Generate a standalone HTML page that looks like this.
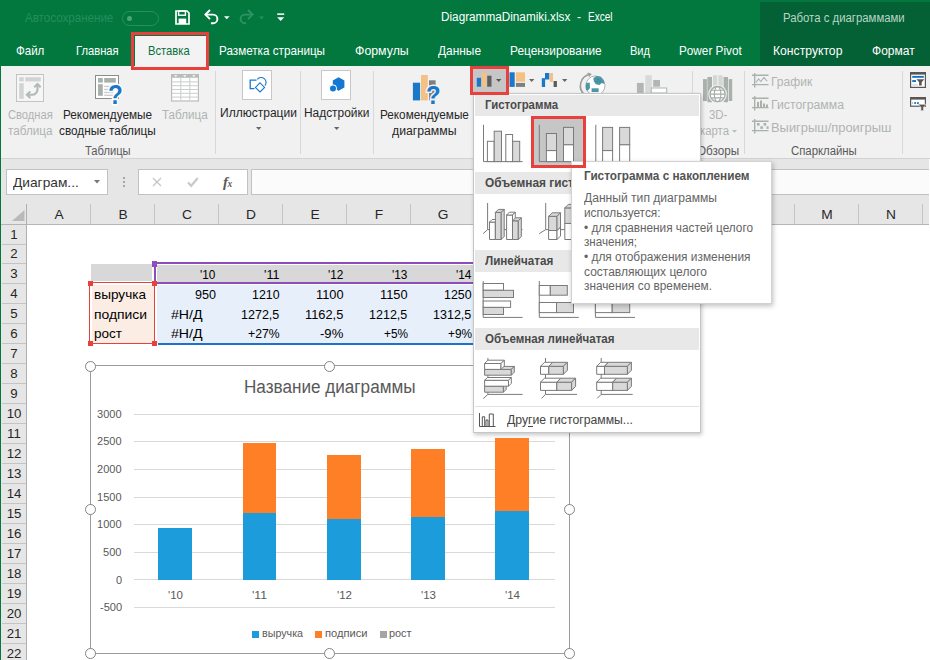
<!DOCTYPE html>
<html><head><meta charset="utf-8"><title>Excel</title>
<style>
*{box-sizing:border-box;margin:0;padding:0}
html,body{width:930px;height:660px;overflow:hidden;background:#fff}
body{font-family:"Liberation Sans",sans-serif;position:relative;color:#222}
.a{position:absolute;white-space:nowrap}
.t{position:absolute;white-space:nowrap;line-height:1;transform-origin:0 50%}
svg{position:absolute;overflow:visible}
</style></head><body>
<div class="a" style="left:0;top:0;width:930px;height:66px;background:#02783f"></div><div class="a" style="left:760px;top:2px;width:170px;height:64px;background:#046035"></div><div class="t" style="left:25.00px;top:11.17px;font-size:13px;color:#268d5c;transform:scaleX(0.8910);">Автосохранение</div><div class="a" style="left:121.5px;top:11px;width:37px;height:15px;border:1px solid #2a8f5e;border-radius:8px"></div><div class="a" style="left:127px;top:16px;width:5px;height:5px;border-radius:3px;background:#4aa57a"></div><svg style="left:175px;top:10px" width="15" height="15" viewBox="0 0 15 15"><path d="M1 1h11l2 2v11h-13z" fill="none" stroke="#fff" stroke-width="1.7"/><rect x="3.6" y="1" width="6.8" height="4.2" fill="none" stroke="#fff" stroke-width="1.4"/><rect x="3.6" y="8.6" width="7.6" height="5.4" fill="#fff"/></svg><svg style="left:203px;top:8px" width="30" height="20" viewBox="0 0 30 20"><path d="M2.5 6.6h7.6a4.3 4.3 0 0 1 0 8.6h-2.2" fill="none" stroke="#fff" stroke-width="1.9"/><path d="M7 2l-4.6 4.6 4.6 4.6" fill="none" stroke="#fff" stroke-width="1.9"/><path d="M21 8.2h5.6l-2.8 3z" fill="#fff"/></svg><svg style="left:238px;top:8px" width="30" height="20" viewBox="0 0 30 20"><path d="M13.5 6.6h-6.6a4.3 4.3 0 0 0 0 8.6h1.2" fill="none" stroke="#2e9464" stroke-width="1.9"/><path d="M10 2l4.6 4.6-4.6 4.6" fill="none" stroke="#2e9464" stroke-width="1.9"/><path d="M21 8.6h5l-2.5 2.8z" fill="#2a8f5e"/></svg><svg style="left:276px;top:12px" width="10" height="12" viewBox="0 0 10 12"><rect x="1.2" y="1.4" width="7" height="1.5" fill="#fff"/><path d="M1.2 5.2h7l-3.5 3.8z" fill="#fff"/></svg><div class="t" style="left:440.70px;top:11.26px;font-size:12.5px;color:#fff;transform:scaleX(0.9402);">DiagrammaDinamiki.xlsx</div><div class="t" style="left:576.50px;top:11.26px;font-size:12.5px;color:#fff;transform:scaleX(0.9609);">-</div><div class="t" style="left:587.70px;top:11.26px;font-size:12.5px;color:#fff;transform:scaleX(0.8048);">Excel</div><div class="t" style="left:783.30px;top:11.56px;font-size:12px;color:#b9d6c5;transform:scaleX(0.9471);">Работа с диаграммами</div><div class="a" style="left:135px;top:36px;width:71px;height:31px;background:#f3f3f3"></div><div class="t" style="left:16.00px;top:43.87px;font-size:13px;color:#fff;transform:scaleX(0.8855);">Файл</div><div class="t" style="left:75.70px;top:43.87px;font-size:13px;color:#fff;transform:scaleX(0.8610);">Главная</div><div class="t" style="left:148.30px;top:43.87px;font-size:13px;color:#0a7040;transform:scaleX(0.8630);">Вставка</div><div class="t" style="left:219.00px;top:43.87px;font-size:13px;color:#fff;transform:scaleX(0.8988);">Разметка страницы</div><div class="t" style="left:355.00px;top:43.87px;font-size:13px;color:#fff;transform:scaleX(0.9493);">Формулы</div><div class="t" style="left:438.30px;top:43.87px;font-size:13px;color:#fff;transform:scaleX(0.9155);">Данные</div><div class="t" style="left:510.00px;top:43.87px;font-size:13px;color:#fff;transform:scaleX(0.9135);">Рецензирование</div><div class="t" style="left:630.00px;top:43.87px;font-size:13px;color:#fff;transform:scaleX(0.8504);">Вид</div><div class="t" style="left:679.30px;top:43.87px;font-size:13px;color:#fff;transform:scaleX(0.9040);">Power Pivot</div><div class="t" style="left:773.30px;top:43.87px;font-size:13px;color:#fff;transform:scaleX(0.9363);">Конструктор</div><div class="t" style="left:872.30px;top:43.87px;font-size:13px;color:#fff;transform:scaleX(0.9247);">Формат</div><div class="a" style="left:0;top:66px;width:930px;height:92px;background:#f1f1f1"></div><div class="a" style="left:0;top:158px;width:930px;height:1px;background:#d2d2d2"></div><svg style="left:16px;top:74px" width="28" height="28" viewBox="0 0 28 28"><rect x=".5" y=".5" width="27" height="27" fill="#f6f6f6" stroke="#c3c5c3"/><rect x="3.2" y="3.2" width="4.5" height="4.2" fill="#d3d3d3"/><rect x="9.2" y="3.2" width="15.6" height="4.2" fill="#d3d3d3"/><rect x="3.2" y="9.2" width="4.5" height="15.6" fill="#d3d3d3"/><path d="M11.5 20.8h4.5a5.5 5.5 0 0 0 5.5-5.5v-4.5" fill="none" stroke="#b1bab5" stroke-width="2.100"/><path d="M14.3 17.6l-3.4 3.2 3.4 3.2" fill="none" stroke="#b1bab5" stroke-width="2.100"/><path d="M18.3 13.3l3.2-3.3 3.2 3.3" fill="none" stroke="#b1bab5" stroke-width="2.100"/></svg><div class="t" style="left:7.70px;top:109.16px;font-size:12px;color:#b0b4b1;transform:scaleX(0.9290);">Сводная</div><div class="t" style="left:8.30px;top:125.26px;font-size:12px;color:#b0b4b1;transform:scaleX(0.9776);">таблица</div><svg style="left:95px;top:75px" width="30" height="30" viewBox="0 0 30 30"><rect x=".5" y=".5" width="23" height="23" fill="#fff" stroke="#8c8c8c" stroke-width="1"/><rect x="3" y="3" width="4.8" height="4.6" fill="#a8b0ab"/><rect x="9.2" y="3" width="11.6" height="4.6" fill="#a8b0ab"/><rect x="3" y="9.2" width="4.8" height="11.6" fill="#a8b0ab"/><rect x="9.2" y="10.8" width="9" height="1.3" fill="#c9c9c9"/><rect x="9.2" y="13.8" width="9" height="1.3" fill="#c9c9c9"/><rect x="9.2" y="16.8" width="9" height="1.3" fill="#c9c9c9"/><rect x="9.2" y="19.6" width="9" height="1.3" fill="#c9c9c9"/></svg><div class="t" style="left:107.800px;top:81.600px;font-size:27px;font-weight:bold;color:#fff;transform:scaleX(.9);-webkit-text-stroke:3px #fff">?</div><div class="t" style="left:107.800px;top:81.600px;font-size:27px;font-weight:bold;color:#1b78c9;transform:scaleX(.9)">?</div><div class="t" style="left:62.70px;top:109.16px;font-size:12px;color:#262626;transform:scaleX(0.9796);">Рекомендуемые</div><div class="t" style="left:58.80px;top:125.26px;font-size:12px;color:#262626;transform:scaleX(0.9829);">сводные таблицы</div><svg style="left:171px;top:74px" width="28" height="28" viewBox="0 0 28 28"><rect x="0" y="0" width="28" height="27.6" fill="#b9bdba"/><rect x="1.2" y="3.8" width="25.6" height="22.6" fill="#fff"/><rect x="9.3" y="3.8" width="1" height="22.6" fill="#c9ccca"/><rect x="18.3" y="3.8" width="1" height="22.6" fill="#c9ccca"/><rect x="1.2" y="7.4" width="25.6" height="1" fill="#c9ccca"/><rect x="1.2" y="11.2" width="25.6" height="1" fill="#c9ccca"/><rect x="1.2" y="15" width="25.6" height="1" fill="#c9ccca"/><rect x="1.2" y="18.8" width="25.6" height="1" fill="#c9ccca"/><rect x="1.2" y="22.6" width="25.6" height="1" fill="#c9ccca"/><path d="M3.1 1.2h3.4l-1.7 1.9z" fill="#fff"/><path d="M12.1 1.2h3.4l-1.7 1.9z" fill="#fff"/><path d="M21.1 1.2h3.4l-1.7 1.9z" fill="#fff"/></svg><div class="t" style="left:162.00px;top:109.16px;font-size:12px;color:#b0b4b1;transform:scaleX(0.9713);">Таблица</div><div class="t" style="left:85.20px;top:144.96px;font-size:12px;color:#5a5a5a;transform:scaleX(0.9306);">Таблицы</div><div class="a" style="left:215px;top:70.5px;width:1px;height:83.5px;background:#d8d8d8"></div><div class="a" style="left:242px;top:70px;width:30px;height:30px;background:#fff;border:1px solid #c8c8c8"></div><svg style="left:242px;top:70px" width="30" height="30" viewBox="0 0 30 30"><path d="M14.5 10.2h-6.3v8.4h4.2" fill="none" stroke="#1b78c9" stroke-width="1.3"/><path d="M15.3 9.3a4.6 4.6 0 1 1 7.6 6.4" fill="none" stroke="#1b78c9" stroke-width="1.1"/><path d="M18 12.8l4.6 4.6-4.6 4.6-4.6-4.6z" fill="#fff" stroke="#1b78c9" stroke-width="1.1"/></svg><div class="t" style="left:219.60px;top:106.56px;font-size:12px;color:#262626;transform:scaleX(1.0019);">Иллюстрации</div><svg style="left:255.8px;top:126.7px" width="5.4" height="3" viewBox="0 0 5.4 3"><path d="M0 0h5.4l-2.7 3z" fill="#666"/></svg><div class="a" style="left:300px;top:70.5px;width:1px;height:83.5px;background:#d8d8d8"></div><div class="a" style="left:321px;top:70px;width:30px;height:30px;background:#fff;border:1px solid #c8c8c8"></div><svg style="left:321px;top:70px" width="30" height="30" viewBox="0 0 30 30"><path d="M17.6 7.2l5.8 3.4v6.8l-5.8 3.4-5.8-3.4v-6.8z" fill="#1477d4"/><circle cx="12" cy="18.4" r="3.9" fill="#fff"/><circle cx="12" cy="18.4" r="3" fill="#1477d4"/></svg><div class="t" style="left:304.40px;top:106.56px;font-size:12px;color:#262626;transform:scaleX(0.9918);">Надстройки</div><svg style="left:334.3px;top:126.7px" width="5.4" height="3" viewBox="0 0 5.4 3"><path d="M0 0h5.4l-2.7 3z" fill="#666"/></svg><div class="a" style="left:373px;top:70.5px;width:1px;height:83.5px;background:#d8d8d8"></div><svg style="left:412px;top:74px" width="30" height="30" viewBox="0 0 30 30"><rect x=".9" y="8.7" width="7.2" height="17.7" fill="#1b78c9"/><rect x="9" y="1" width="6.8" height="25.4" fill="#f4c083"/><rect x="17" y="6.3" width="6.6" height="20.1" fill="#7f7f7f"/></svg><div class="t" style="left:426.300px;top:82.300px;font-size:26px;font-weight:bold;color:#fff;transform:scaleX(.92);-webkit-text-stroke:3px #f1f1f1">?</div><div class="t" style="left:426.300px;top:82.300px;font-size:26px;font-weight:bold;color:#1b78c9;transform:scaleX(.92)">?</div><div class="t" style="left:380.40px;top:109.16px;font-size:12px;color:#262626;transform:scaleX(0.9785);">Рекомендуемые</div><div class="t" style="left:392.30px;top:125.26px;font-size:12px;color:#262626;transform:scaleX(1.0201);">диаграммы</div><div class="a" style="left:471px;top:67px;width:37px;height:27px;background:#c6c6c6"></div><svg style="left:470px;top:66px" width="100" height="30" viewBox="0 0 100 30"><rect x="6.8" y="11.8" width="4.3" height="8.9" fill="#1b78c9"/><rect x="11.8" y="6.6" width="4.5" height="14.1" fill="#f4c083"/><rect x="17.2" y="9.7" width="4.3" height="11" fill="#5f5f5f"/><rect x="39.5" y="6.3" width="5.2" height="14.6" fill="#1b78c9"/><rect x="45.9" y="6.3" width="9.1" height="9.4" fill="#f4c083"/><rect x="45.9" y="16.9" width="9.1" height="4" fill="#7f7f7f"/><rect x="71.800" y="12.200" width="3.300" height="8.800" fill="#1b78c9"/><rect x="75" y="7" width="4.300" height="6.500" fill="#1b78c9"/><rect x="79.800" y="7" width="3.200" height="8.900" fill="#f4c083"/><rect x="83.600" y="15" width="3.300" height="6" fill="#5f5a5a"/></svg><svg style="left:496px;top:78.8px" width="5.4" height="3" viewBox="0 0 5.4 3"><path d="M0 0h5.4l-2.7 3z" fill="#555"/></svg><svg style="left:528.7px;top:78.8px" width="5.4" height="3" viewBox="0 0 5.4 3"><path d="M0 0h5.4l-2.7 3z" fill="#666"/></svg><svg style="left:561.7px;top:78.8px" width="5.4" height="3" viewBox="0 0 5.4 3"><path d="M0 0h5.4l-2.7 3z" fill="#666"/></svg><svg style="left:580px;top:70px" width="30" height="30" viewBox="0 0 30 30"><path d="M10.300 4.300A11.600 11.600 0 0 0 5 25" fill="none" stroke="#9b9b9b" stroke-width="1.600"/><path d="M7.500 3l3.300 1.300-2 2.400" fill="none" stroke="#9b9b9b" stroke-width="1.100"/><circle cx="15.400" cy="15.600" r="9.600" fill="#fff" stroke="#a0a0a0" stroke-width=".8"/><path d="M13.300 8.200l3-2.200 4.500.8 3 3.400.6 3.800-2.600-1-2.400 2-3.600-.8-2-3z" fill="#4f95a8"/><path d="M6.300 13l3.400-.6.300 5.600-2 2.600-1.800-.4c-.6-2.400-.6-4.800.1-7.200z" fill="#4f95a8"/><rect x="11.600" y="18.300" width="7" height="3.800" fill="#4f95a8"/><circle cx="18" cy="9.500" r=".6" fill="#1f7a4d"/><circle cx="20" cy="11" r=".6" fill="#1f7a4d"/><circle cx="17" cy="11.500" r=".6" fill="#1f7a4d"/></svg><svg style="left:636px;top:74px" width="32" height="20" viewBox="0 0 32 20"><rect x=".9" y="8.9" width="6.8" height="10" fill="#b1b6b3"/><rect x="9.3" y="1.2" width="6.5" height="18" fill="#d9d9d9"/><rect x="17.2" y="6" width="6.8" height="6.7" fill="#b1b6b3"/><rect x="15.3" y="14" width="15.4" height="5" fill="#fff" stroke="#b1b6b3"/></svg><div class="a" style="left:692px;top:70.5px;width:1px;height:83.5px;background:#d8d8d8"></div><svg style="left:703px;top:74px" width="30" height="29" viewBox="0 0 30 29"><rect x="0" y="5.1" width="3.9" height="21.9" fill="#a9b1ac"/><rect x="4.4" y="3" width="4.6" height="25.2" fill="#a9b1ac"/><rect x="10" y="1.2" width="4.2" height="27" fill="#d5d7d5"/><rect x="15.4" y="1.2" width="4.3" height="27" fill="#d5d7d5"/><rect x="20.6" y="3" width="4.4" height="25.2" fill="#a9b1ac"/><rect x="25.7" y="5.1" width="3.5" height="21.9" fill="#a9b1ac"/><circle cx="14.600" cy="20.100" r="9.300" fill="#f1f1f1"/><circle cx="14.600" cy="20.100" r="7.600" fill="#fff" stroke="#a4aca7" stroke-width="1.300"/><ellipse cx="14.600" cy="20.100" rx="3.300" ry="7.600" fill="none" stroke="#a4aca7" stroke-width="1.100"/><path d="M7 20.100h15.200M8.300 16.300h12.600M8.300 23.900h12.600" stroke="#a4aca7" stroke-width="1.100" fill="none"/></svg><div class="t" style="left:709.00px;top:109.16px;font-size:12px;color:#b0b4b1;transform:scaleX(0.9464);">3D-</div><div class="t" style="left:700.00px;top:125.26px;font-size:12px;color:#b0b4b1;transform:scaleX(0.9467);">карта</div><svg style="left:732px;top:130.4px" width="5" height="2.8" viewBox="0 0 5 2.8"><path d="M0 0h5l-2.5 2.8z" fill="#bdbdbd"/></svg><div class="t" style="left:697.00px;top:144.96px;font-size:12px;color:#5a5a5a;transform:scaleX(0.9750);">Обзоры</div><div class="a" style="left:744px;top:70.5px;width:1px;height:83.5px;background:#d8d8d8"></div><svg style="left:752px;top:72.500px" width="17" height="15" viewBox="0 0 17 15"><path d="M2.700 0v14.500M0 2.300h16.500M0 11.600h16.500" stroke="#a9b1ac" stroke-width="1.400" fill="none"/><path d="M4 9.500l2.600-3.600 2.300 2.600 3-4 3.300 3.600" stroke="#a9b1ac" stroke-width="1.100" fill="none"/></svg><svg style="left:752px;top:95.500px" width="17" height="15" viewBox="0 0 17 15"><path d="M2.700 0v14.500M0 2.300h16.500M0 11.600h16.500" stroke="#a9b1ac" stroke-width="1.400" fill="none"/><rect x="5" y="6" width="2" height="5" fill="#a9b1ac"/><rect x="8" y="4.500" width="2" height="6.500" fill="#a9b1ac"/><rect x="11" y="7.500" width="2" height="3.500" fill="#a9b1ac"/><rect x="14" y="8.500" width="2" height="2.500" fill="#a9b1ac"/></svg><svg style="left:752px;top:118.500px" width="17" height="15" viewBox="0 0 17 15"><path d="M2.700 0v14.500M0 2.300h16.500M0 11.600h16.500" stroke="#a9b1ac" stroke-width="1.400" fill="none"/><rect x="5" y="4" width="2.600" height="2.600" fill="#a9b1ac"/><rect x="8.300" y="7.300" width="2.600" height="2.600" fill="#a9b1ac"/><rect x="11.600" y="4" width="2.600" height="2.600" fill="#a9b1ac"/><rect x="14.600" y="7.300" width="2" height="2.600" fill="#a9b1ac"/></svg><div class="t" style="left:770.60px;top:75.56px;font-size:12.5px;color:#b0b4b1;transform:scaleX(0.9647);">График</div><div class="t" style="left:770.60px;top:98.66px;font-size:12.5px;color:#b0b4b1;transform:scaleX(0.9807);">Гистограмма</div><div class="t" style="left:770.60px;top:121.56px;font-size:12.5px;color:#b0b4b1;transform:scaleX(1.0328);">Выигрыш/проигрыш</div><div class="t" style="left:790.50px;top:144.96px;font-size:12px;color:#5a5a5a;transform:scaleX(0.9450);">Спарклайны</div><div class="a" style="left:902px;top:70.5px;width:1px;height:83.5px;background:#d8d8d8"></div><svg style="left:910px;top:72px" width="16" height="16" viewBox="0 0 16 16"><rect x=".6" y=".6" width="14.800" height="14.800" fill="#fff" stroke="#595555" stroke-width="1.200"/><rect x="0" y="0" width="16" height="2.600" fill="#595555"/><rect x="2.200" y="3.900" width="11.600" height="1.900" fill="#1570c4"/><rect x="2.200" y="8.100" width="3.800" height="1.900" fill="#1570c4"/><rect x="2.200" y="12.300" width="5.600" height="1.300" fill="#b9dcf2"/><path d="M6.500 7.300h7.800l-2.600 3v3.300h-2.600v-3.300z" fill="#595555"/></svg><svg style="left:910px;top:97px" width="16" height="14" viewBox="0 0 16 14"><rect x=".6" y=".6" width="14.800" height="8.600" fill="#fff" stroke="#595555" stroke-width="1.200"/><rect x="0" y="0" width="16" height="2.600" fill="#595555"/><rect x="4.200" y="5.200" width="1.900" height="1.700" fill="#1570c4"/><rect x="7" y="5.200" width="1.900" height="1.700" fill="#1570c4"/><rect x="2" y="5.200" width=".8" height="1.700" fill="#9aa"/><path d="M8.200 7.300h8l-2.700 3v3.400h-2.600v-3.400z" fill="#595555" stroke="#f1f1f1" stroke-width=".6"/></svg><div class="a" style="left:0;top:159px;width:930px;height:65.500px;background:#e6e6e6"></div><div class="a" style="left:6px;top:169px;width:102px;height:26px;background:#fff;border:1px solid #c2c2c2"></div><div class="t" style="left:13.40px;top:175.97px;font-size:13px;color:#333;transform:scaleX(1.0567);">Диаграм...</div><svg style="left:93.8px;top:179.500px" width="6" height="3.4" viewBox="0 0 6 3.4"><path d="M0 0h6l-3 3.4z" fill="#777"/></svg><div class="a" style="left:123px;top:176.5px;width:1.700px;height:2px;background:#a6a6a6"></div><div class="a" style="left:123px;top:180.8px;width:1.700px;height:2px;background:#a6a6a6"></div><div class="a" style="left:123px;top:185.1px;width:1.700px;height:2px;background:#a6a6a6"></div><div class="a" style="left:138px;top:169px;width:110px;height:26px;background:#fff;border:1px solid #c2c2c2"></div><svg style="left:152px;top:177px" width="10" height="10" viewBox="0 0 10 10"><path d="M1 1l8 8M9 1l-8 8" stroke="#c4c4c4" stroke-width="1.200" fill="none"/></svg><svg style="left:187px;top:177px" width="12" height="10" viewBox="0 0 12 10"><path d="M1 5.500l3.200 3.300 6.600-7.800" stroke="#c9c9c9" stroke-width="2.200" fill="none"/></svg><div class="t" style="left:223px;top:175px;font-family:'Liberation Serif',serif;font-style:italic;font-weight:bold;font-size:15px;color:#5a5a5a;letter-spacing:-.5px">f<span style="font-size:9.500px">x</span></div><div class="a" style="left:251px;top:169px;width:690px;height:26px;background:#fbfbfb;border:1px solid #c2c2c2"></div><div class="a" style="left:0;top:224px;width:930px;height:1px;background:#b5b5b5"></div><div class="a" style="left:26px;top:204px;width:1px;height:20px;background:#c4c4c4"></div><div class="t" style="left:26.5px;top:209.3px;width:64px;text-align:center;font-size:12.500px;color:#262626;transform:scaleX(1.1);transform-origin:50% 50%">A</div><div class="a" style="left:90px;top:204px;width:1px;height:20px;background:#c4c4c4"></div><div class="t" style="left:90.5px;top:209.3px;width:64px;text-align:center;font-size:12.500px;color:#262626;transform:scaleX(1.1);transform-origin:50% 50%">B</div><div class="a" style="left:154px;top:204px;width:1px;height:20px;background:#c4c4c4"></div><div class="t" style="left:154.5px;top:209.3px;width:64px;text-align:center;font-size:12.500px;color:#262626;transform:scaleX(1.1);transform-origin:50% 50%">C</div><div class="a" style="left:218px;top:204px;width:1px;height:20px;background:#c4c4c4"></div><div class="t" style="left:218.5px;top:209.3px;width:64px;text-align:center;font-size:12.500px;color:#262626;transform:scaleX(1.1);transform-origin:50% 50%">D</div><div class="a" style="left:282px;top:204px;width:1px;height:20px;background:#c4c4c4"></div><div class="t" style="left:282.5px;top:209.3px;width:64px;text-align:center;font-size:12.500px;color:#262626;transform:scaleX(1.1);transform-origin:50% 50%">E</div><div class="a" style="left:346px;top:204px;width:1px;height:20px;background:#c4c4c4"></div><div class="t" style="left:346.5px;top:209.3px;width:64px;text-align:center;font-size:12.500px;color:#262626;transform:scaleX(1.1);transform-origin:50% 50%">F</div><div class="a" style="left:410px;top:204px;width:1px;height:20px;background:#c4c4c4"></div><div class="t" style="left:410.5px;top:209.3px;width:64px;text-align:center;font-size:12.500px;color:#262626;transform:scaleX(1.1);transform-origin:50% 50%">G</div><div class="a" style="left:474px;top:204px;width:1px;height:20px;background:#c4c4c4"></div><div class="t" style="left:474.5px;top:209.3px;width:64px;text-align:center;font-size:12.500px;color:#262626;transform:scaleX(1.1);transform-origin:50% 50%">H</div><div class="a" style="left:538px;top:204px;width:1px;height:20px;background:#c4c4c4"></div><div class="t" style="left:538.5px;top:209.3px;width:64px;text-align:center;font-size:12.500px;color:#262626;transform:scaleX(1.1);transform-origin:50% 50%">I</div><div class="a" style="left:602px;top:204px;width:1px;height:20px;background:#c4c4c4"></div><div class="t" style="left:602.5px;top:209.3px;width:64px;text-align:center;font-size:12.500px;color:#262626;transform:scaleX(1.1);transform-origin:50% 50%">J</div><div class="a" style="left:666px;top:204px;width:1px;height:20px;background:#c4c4c4"></div><div class="t" style="left:666.5px;top:209.3px;width:64px;text-align:center;font-size:12.500px;color:#262626;transform:scaleX(1.1);transform-origin:50% 50%">K</div><div class="a" style="left:730px;top:204px;width:1px;height:20px;background:#c4c4c4"></div><div class="t" style="left:730.5px;top:209.3px;width:64px;text-align:center;font-size:12.500px;color:#262626;transform:scaleX(1.1);transform-origin:50% 50%">L</div><div class="a" style="left:794px;top:204px;width:1px;height:20px;background:#c4c4c4"></div><div class="t" style="left:794.5px;top:209.3px;width:64px;text-align:center;font-size:12.500px;color:#262626;transform:scaleX(1.1);transform-origin:50% 50%">M</div><div class="a" style="left:858px;top:204px;width:1px;height:20px;background:#c4c4c4"></div><div class="t" style="left:858.5px;top:209.3px;width:64px;text-align:center;font-size:12.500px;color:#262626;transform:scaleX(1.1);transform-origin:50% 50%">N</div><div class="a" style="left:922px;top:204px;width:1px;height:20px;background:#c4c4c4"></div><svg style="left:11.500px;top:209.500px" width="12.500" height="11" viewBox="0 0 12.500 11"><path d="M12.500 0v11h-12.500z" fill="#b9b9b9"/></svg><div class="a" style="left:0;top:225px;width:26.500px;height:435px;background:#e6e6e6"></div><div class="a" style="left:26px;top:204px;width:1px;height:456px;background:#b0b0b0"></div><div class="a" style="left:2px;top:244px;width:24px;height:1px;background:#c4c4c4"></div><div class="t" style="left:2px;top:228.9px;width:24px;text-align:center;font-size:12.500px;color:#262626;transform:scaleX(1.06);transform-origin:50% 50%">1</div><div class="a" style="left:2px;top:263px;width:24px;height:1px;background:#c4c4c4"></div><div class="t" style="left:2px;top:248.4px;width:24px;text-align:center;font-size:12.500px;color:#262626;transform:scaleX(1.06);transform-origin:50% 50%">2</div><div class="a" style="left:2px;top:283px;width:24px;height:1px;background:#c4c4c4"></div><div class="t" style="left:2px;top:267.9px;width:24px;text-align:center;font-size:12.500px;color:#262626;transform:scaleX(1.06);transform-origin:50% 50%">3</div><div class="a" style="left:2px;top:303px;width:24px;height:1px;background:#c4c4c4"></div><div class="t" style="left:2px;top:287.9px;width:24px;text-align:center;font-size:12.500px;color:#262626;transform:scaleX(1.06);transform-origin:50% 50%">4</div><div class="a" style="left:2px;top:323px;width:24px;height:1px;background:#c4c4c4"></div><div class="t" style="left:2px;top:307.9px;width:24px;text-align:center;font-size:12.500px;color:#262626;transform:scaleX(1.06);transform-origin:50% 50%">5</div><div class="a" style="left:2px;top:343px;width:24px;height:1px;background:#c4c4c4"></div><div class="t" style="left:2px;top:327.9px;width:24px;text-align:center;font-size:12.500px;color:#262626;transform:scaleX(1.06);transform-origin:50% 50%">6</div><div class="a" style="left:2px;top:363px;width:24px;height:1px;background:#c4c4c4"></div><div class="t" style="left:2px;top:347.9px;width:24px;text-align:center;font-size:12.500px;color:#262626;transform:scaleX(1.06);transform-origin:50% 50%">7</div><div class="a" style="left:2px;top:383px;width:24px;height:1px;background:#c4c4c4"></div><div class="t" style="left:2px;top:367.9px;width:24px;text-align:center;font-size:12.500px;color:#262626;transform:scaleX(1.06);transform-origin:50% 50%">8</div><div class="a" style="left:2px;top:403px;width:24px;height:1px;background:#c4c4c4"></div><div class="t" style="left:2px;top:387.9px;width:24px;text-align:center;font-size:12.500px;color:#262626;transform:scaleX(1.06);transform-origin:50% 50%">9</div><div class="a" style="left:2px;top:423px;width:24px;height:1px;background:#c4c4c4"></div><div class="t" style="left:2px;top:407.9px;width:24px;text-align:center;font-size:12.500px;color:#262626;transform:scaleX(1.06);transform-origin:50% 50%">10</div><div class="a" style="left:2px;top:443px;width:24px;height:1px;background:#c4c4c4"></div><div class="t" style="left:2px;top:427.9px;width:24px;text-align:center;font-size:12.500px;color:#262626;transform:scaleX(1.06);transform-origin:50% 50%">11</div><div class="a" style="left:2px;top:463px;width:24px;height:1px;background:#c4c4c4"></div><div class="t" style="left:2px;top:447.9px;width:24px;text-align:center;font-size:12.500px;color:#262626;transform:scaleX(1.06);transform-origin:50% 50%">12</div><div class="a" style="left:2px;top:483px;width:24px;height:1px;background:#c4c4c4"></div><div class="t" style="left:2px;top:467.9px;width:24px;text-align:center;font-size:12.500px;color:#262626;transform:scaleX(1.06);transform-origin:50% 50%">13</div><div class="a" style="left:2px;top:503px;width:24px;height:1px;background:#c4c4c4"></div><div class="t" style="left:2px;top:487.9px;width:24px;text-align:center;font-size:12.500px;color:#262626;transform:scaleX(1.06);transform-origin:50% 50%">14</div><div class="a" style="left:2px;top:523px;width:24px;height:1px;background:#c4c4c4"></div><div class="t" style="left:2px;top:507.9px;width:24px;text-align:center;font-size:12.500px;color:#262626;transform:scaleX(1.06);transform-origin:50% 50%">15</div><div class="a" style="left:2px;top:543px;width:24px;height:1px;background:#c4c4c4"></div><div class="t" style="left:2px;top:527.9px;width:24px;text-align:center;font-size:12.500px;color:#262626;transform:scaleX(1.06);transform-origin:50% 50%">16</div><div class="a" style="left:2px;top:563px;width:24px;height:1px;background:#c4c4c4"></div><div class="t" style="left:2px;top:547.9px;width:24px;text-align:center;font-size:12.500px;color:#262626;transform:scaleX(1.06);transform-origin:50% 50%">17</div><div class="a" style="left:2px;top:583px;width:24px;height:1px;background:#c4c4c4"></div><div class="t" style="left:2px;top:567.9px;width:24px;text-align:center;font-size:12.500px;color:#262626;transform:scaleX(1.06);transform-origin:50% 50%">18</div><div class="a" style="left:2px;top:603px;width:24px;height:1px;background:#c4c4c4"></div><div class="t" style="left:2px;top:587.9px;width:24px;text-align:center;font-size:12.500px;color:#262626;transform:scaleX(1.06);transform-origin:50% 50%">19</div><div class="a" style="left:2px;top:623px;width:24px;height:1px;background:#c4c4c4"></div><div class="t" style="left:2px;top:607.9px;width:24px;text-align:center;font-size:12.500px;color:#262626;transform:scaleX(1.06);transform-origin:50% 50%">20</div><div class="a" style="left:2px;top:643px;width:24px;height:1px;background:#c4c4c4"></div><div class="t" style="left:2px;top:627.9px;width:24px;text-align:center;font-size:12.500px;color:#262626;transform:scaleX(1.06);transform-origin:50% 50%">21</div><div class="a" style="left:2px;top:663px;width:24px;height:1px;background:#c4c4c4"></div><div class="t" style="left:2px;top:647.9px;width:24px;text-align:center;font-size:12.500px;color:#262626;transform:scaleX(1.06);transform-origin:50% 50%">22</div><div class="a" style="left:90.500px;top:264px;width:61px;height:17px;background:#d8d8d8"></div><div class="a" style="left:157px;top:265px;width:318px;height:16.500px;background:#d8d8d8"></div><div class="a" style="left:92px;top:285px;width:61.500px;height:57.500px;background:#fbede4"></div><div class="a" style="left:157px;top:285px;width:318px;height:57.500px;background:#e7effb"></div><div class="a" style="left:157.500px;top:342.500px;width:317px;height:2px;background:#1f72c9"></div><div class="a" style="left:154px;top:262px;width:321px;height:2px;background:#8d4dbd"></div><div class="a" style="left:153.500px;top:262px;width:2px;height:22px;background:#8d4dbd"></div><div class="a" style="left:157px;top:282px;width:318px;height:2px;background:#8d4dbd"></div><div class="a" style="left:151.800px;top:261.200px;width:5.500px;height:5.500px;background:#8d4dbd"></div><div class="a" style="left:89.400px;top:282.400px;width:65.900px;height:61.900px;border:1.700px solid #e8403c"></div><div class="a" style="left:87.8px;top:280.8px;width:5.400px;height:5.400px;background:#e8403c"></div><div class="a" style="left:151.8px;top:280.8px;width:5.400px;height:5.400px;background:#e8403c"></div><div class="a" style="left:87.8px;top:340.8px;width:5.400px;height:5.400px;background:#e8403c"></div><div class="a" style="left:151.8px;top:340.8px;width:5.400px;height:5.400px;background:#e8403c"></div><div class="t" style="left:200.30px;top:267.75px;font-size:13.2px;color:#000;transform:scaleX(0.8961);">&#x27;10</div><div class="t" style="left:264.30px;top:267.75px;font-size:13.2px;color:#000;transform:scaleX(0.9502);">&#x27;11</div><div class="t" style="left:328.30px;top:267.75px;font-size:13.2px;color:#000;transform:scaleX(0.8961);">&#x27;12</div><div class="t" style="left:392.30px;top:267.75px;font-size:13.2px;color:#000;transform:scaleX(0.8961);">&#x27;13</div><div class="t" style="left:456.30px;top:267.75px;font-size:13.2px;color:#000;transform:scaleX(0.8961);">&#x27;14</div><div class="t" style="left:93.50px;top:287.65px;font-size:13.2px;color:#000;transform:scaleX(1.0291);">выручка</div><div class="t" style="left:194.70px;top:287.65px;font-size:13.2px;color:#000;transform:scaleX(0.9544);">950</div><div class="t" style="left:252.20px;top:287.65px;font-size:13.2px;color:#000;transform:scaleX(0.9374);">1210</div><div class="t" style="left:316.20px;top:287.65px;font-size:13.2px;color:#000;transform:scaleX(0.9698);">1100</div><div class="t" style="left:380.20px;top:287.65px;font-size:13.2px;color:#000;transform:scaleX(0.9698);">1150</div><div class="t" style="left:444.20px;top:287.65px;font-size:13.2px;color:#000;transform:scaleX(0.9374);">1250</div><div class="t" style="left:93.50px;top:307.55px;font-size:13.2px;color:#000;transform:scaleX(1.0527);">подписи</div><div class="t" style="left:170.75px;top:307.55px;font-size:13.2px;color:#000;transform:scaleX(1.0695);">#Н/Д</div><div class="t" style="left:241.40px;top:307.55px;font-size:13.2px;color:#000;transform:scaleX(0.9495);">1272,5</div><div class="t" style="left:305.40px;top:307.55px;font-size:13.2px;color:#000;transform:scaleX(0.9732);">1162,5</div><div class="t" style="left:369.40px;top:307.55px;font-size:13.2px;color:#000;transform:scaleX(0.9495);">1212,5</div><div class="t" style="left:433.40px;top:307.55px;font-size:13.2px;color:#000;transform:scaleX(0.9495);">1312,5</div><div class="t" style="left:93.50px;top:327.45px;font-size:13.2px;color:#000;transform:scaleX(1.0256);">рост</div><div class="t" style="left:170.75px;top:327.45px;font-size:13.2px;color:#000;transform:scaleX(1.0695);">#Н/Д</div><div class="t" style="left:248.10px;top:327.45px;font-size:13.2px;color:#000;transform:scaleX(0.9268);">+27%</div><div class="t" style="left:320.40px;top:327.45px;font-size:13.2px;color:#000;transform:scaleX(0.9935);">-9%</div><div class="t" style="left:383.70px;top:327.45px;font-size:13.2px;color:#000;transform:scaleX(0.8968);">+5%</div><div class="t" style="left:447.70px;top:327.45px;font-size:13.2px;color:#000;transform:scaleX(0.8968);">+9%</div><div class="a" style="left:89.6px;top:365.4px;width:480.5px;height:289px;background:#fff;border:1.800px solid #9c9c9c"></div><div class="a" style="left:134px;top:413.5px;width:421px;height:1px;background:#d9d9d9"></div><div class="t" style="left:97.30px;top:408.74px;font-size:11px;color:#595959;transform:scaleX(1.0012);">3000</div><div class="a" style="left:134px;top:441.2px;width:421px;height:1px;background:#d9d9d9"></div><div class="t" style="left:97.30px;top:436.44px;font-size:11px;color:#595959;transform:scaleX(1.0012);">2500</div><div class="a" style="left:134px;top:468.8px;width:421px;height:1px;background:#d9d9d9"></div><div class="t" style="left:97.30px;top:464.04px;font-size:11px;color:#595959;transform:scaleX(1.0012);">2000</div><div class="a" style="left:134px;top:496.5px;width:421px;height:1px;background:#d9d9d9"></div><div class="t" style="left:97.30px;top:491.74px;font-size:11px;color:#595959;transform:scaleX(1.0012);">1500</div><div class="a" style="left:134px;top:524.1px;width:421px;height:1px;background:#d9d9d9"></div><div class="t" style="left:97.30px;top:519.34px;font-size:11px;color:#595959;transform:scaleX(1.0012);">1000</div><div class="a" style="left:134px;top:551.7px;width:421px;height:1px;background:#d9d9d9"></div><div class="t" style="left:103.40px;top:546.94px;font-size:11px;color:#595959;transform:scaleX(1.0026);">500</div><div class="a" style="left:134px;top:579.3px;width:421px;height:1px;background:#d9d9d9"></div><div class="t" style="left:115.70px;top:574.54px;font-size:11px;color:#595959;transform:scaleX(0.9971);">0</div><div class="a" style="left:134px;top:606.9px;width:421px;height:1px;background:#d9d9d9"></div><div class="t" style="left:99.60px;top:602.14px;font-size:11px;color:#595959;transform:scaleX(1.0084);">-500</div><div class="a" style="left:158px;top:528px;width:34px;height:52px;background:#1c9cda"></div><div class="a" style="left:243px;top:442.5px;width:33px;height:70.5px;background:#ff7f27"></div><div class="a" style="left:243px;top:513px;width:33px;height:67px;background:#1c9cda"></div><div class="a" style="left:327px;top:455px;width:34px;height:64px;background:#ff7f27"></div><div class="a" style="left:327px;top:519px;width:34px;height:61px;background:#1c9cda"></div><div class="a" style="left:411px;top:449px;width:34px;height:68px;background:#ff7f27"></div><div class="a" style="left:411px;top:517px;width:34px;height:63px;background:#1c9cda"></div><div class="a" style="left:495px;top:438px;width:34px;height:73px;background:#ff7f27"></div><div class="a" style="left:495px;top:511px;width:34px;height:69px;background:#1c9cda"></div><div class="t" style="left:243.50px;top:378.03px;font-size:18px;color:#595959;transform:scaleX(0.9513);">Название диаграммы</div><div class="t" style="left:167.50px;top:590.04px;font-size:11px;color:#595959;transform:scaleX(1.0464);">&#x27;10</div><div class="t" style="left:252.00px;top:590.04px;font-size:11px;color:#595959;transform:scaleX(1.1095);">&#x27;11</div><div class="t" style="left:336.50px;top:590.04px;font-size:11px;color:#595959;transform:scaleX(1.0464);">&#x27;12</div><div class="t" style="left:420.50px;top:590.04px;font-size:11px;color:#595959;transform:scaleX(1.0464);">&#x27;13</div><div class="t" style="left:504.50px;top:590.04px;font-size:11px;color:#595959;transform:scaleX(1.0464);">&#x27;14</div><div class="a" style="left:252px;top:630.500px;width:7px;height:7px;background:#1c9cda"></div><div class="t" style="left:262.00px;top:628.25px;font-size:11.5px;color:#595959;transform:scaleX(0.9305);">выручка</div><div class="a" style="left:315px;top:630.500px;width:7px;height:7px;background:#ff7f27"></div><div class="t" style="left:325.00px;top:628.25px;font-size:11.5px;color:#595959;transform:scaleX(0.9680);">подписи</div><div class="a" style="left:380px;top:630.500px;width:7px;height:7px;background:#a5a5a5"></div><div class="t" style="left:388.50px;top:628.25px;font-size:11.5px;color:#595959;transform:scaleX(0.9450);">рост</div><div class="a" style="left:84.8px;top:360.6px;width:11.400px;height:11.400px;border-radius:6px;background:#fff;border:1.900px solid #838383"></div><div class="a" style="left:323.8px;top:360.6px;width:11.400px;height:11.400px;border-radius:6px;background:#fff;border:1.900px solid #838383"></div><div class="a" style="left:563.5px;top:360.6px;width:11.400px;height:11.400px;border-radius:6px;background:#fff;border:1.900px solid #838383"></div><div class="a" style="left:84.8px;top:503.8px;width:11.400px;height:11.400px;border-radius:6px;background:#fff;border:1.900px solid #838383"></div><div class="a" style="left:563.5px;top:503.8px;width:11.400px;height:11.400px;border-radius:6px;background:#fff;border:1.900px solid #838383"></div><div class="a" style="left:84.8px;top:647.8px;width:11.400px;height:11.400px;border-radius:6px;background:#fff;border:1.900px solid #838383"></div><div class="a" style="left:323.8px;top:647.8px;width:11.400px;height:11.400px;border-radius:6px;background:#fff;border:1.900px solid #838383"></div><div class="a" style="left:563.5px;top:647.8px;width:11.400px;height:11.400px;border-radius:6px;background:#fff;border:1.900px solid #838383"></div><div class="a" style="left:473px;top:92.5px;width:227.5px;height:340.5px;background:#fff;border:1px solid #c6c6c6;box-shadow:1px 2px 4px rgba(0,0,0,.22)"></div><div class="a" style="left:475px;top:94.5px;width:223.5px;height:21.5px;background:#e8e8e8"></div><div class="t" style="left:485.00px;top:99.16px;font-size:12px;color:#4a4a4a;transform:scaleX(0.9496);font-weight:bold;">Гистограмма</div><div class="a" style="left:475px;top:172px;width:223.5px;height:22px;background:#e8e8e8"></div><div class="t" style="left:485.00px;top:176.56px;font-size:12px;color:#4a4a4a;transform:scaleX(0.9889);font-weight:bold;">Объемная гистограмма</div><div class="a" style="left:475px;top:250px;width:223.5px;height:21.5px;background:#e8e8e8"></div><div class="t" style="left:485.00px;top:254.76px;font-size:12px;color:#4a4a4a;transform:scaleX(0.9703);font-weight:bold;">Линейчатая</div><div class="a" style="left:475px;top:328.3px;width:223.5px;height:21.4px;background:#e8e8e8"></div><div class="t" style="left:485.00px;top:333.36px;font-size:12px;color:#4a4a4a;transform:scaleX(0.9630);font-weight:bold;">Объемная линейчатая</div><div class="a" style="left:533px;top:118px;width:52px;height:48px;background:#c6c6c6"></div><svg style="left:0;top:0" width="930" height="660" viewBox="0 0 930 660" fill="none" stroke="#7a7a7a" stroke-width="1"><path d="M483.500 124.800V161.600H522.600"/><rect x="487.4" y="141.3" width="6.8" height="20.3" fill="#fff"/><rect x="494.2" y="131.2" width="7.3" height="30.4" fill="#d9d9d9"/><rect x="505.8" y="134.5" width="6.8" height="27.1" fill="#fff"/><rect x="512.6" y="141.3" width="7.1" height="20.3" fill="#d9d9d9"/><path d="M539.300 124.800V161.600H582.300"/><rect x="546.4" y="133.5" width="10.1" height="17.1" fill="#d9d9d9"/><rect x="546.4" y="150.6" width="10.1" height="11" fill="#fff"/><rect x="563.5" y="127.4" width="10" height="17.4" fill="#d9d9d9"/><rect x="563.5" y="144.8" width="10" height="16.8" fill="#fff"/><path d="M595.800 124.800V161.600H638"/><rect x="602.6" y="127.4" width="10" height="23.2" fill="#d9d9d9"/><rect x="602.6" y="150.6" width="10" height="11" fill="#fff"/><rect x="619.6" y="127.4" width="10.1" height="17.4" fill="#d9d9d9"/><rect x="619.6" y="144.8" width="10.1" height="16.8" fill="#fff"/><path d="M487.600 203V229.600H522.500M487.600 229.600L483.100 233.700"/><path d="M489.5 222.1H495.4V239.5H489.5Z" fill="#fff"/><path d="M489.5 222.1l2.6 -2.6H498l-2.6 2.6Z" fill="#fff"/><path d="M495.4 222.1l2.6 -2.6V236.9l-2.6 2.6Z" fill="#fff"/><path d="M495.4 212.4H501.2V239.5H495.4Z" fill="#d9d9d9"/><path d="M495.4 212.4l3 -3H504.2l-3 3Z" fill="#d9d9d9"/><path d="M501.2 212.4l3 -3V236.5l-3 3Z" fill="#d9d9d9"/><path d="M506.6 215H512.5V239.5H506.6Z" fill="#fff"/><path d="M506.6 215l2.8 -2.8H515.3l-2.8 2.8Z" fill="#fff"/><path d="M512.5 215l2.8 -2.8V236.7l-2.8 2.8Z" fill="#fff"/><path d="M512.5 220.8H518.3V239.5H512.5Z" fill="#d9d9d9"/><path d="M512.5 220.8l3 -3H521.3l-3 3Z" fill="#d9d9d9"/><path d="M518.3 220.8l3 -3V236.5l-3 3Z" fill="#d9d9d9"/><path d="M545.700 203V229.600H580M545.700 229.600L539.200 233.700"/><path d="M548.6 230.5H557V239.5H548.6Z" fill="#fff"/><path d="M548.6 230.5l3.5 -3.5H560.5l-3.5 3.5Z" fill="#fff"/><path d="M557 230.5l3.5 -3.5V236l-3.5 3.5Z" fill="#fff"/><path d="M548.6 216.3H557V230.5H548.6Z" fill="#d9d9d9"/><path d="M548.6 216.3l3.5 -3.5H560.5l-3.5 3.5Z" fill="#d9d9d9"/><path d="M557 216.3l3.5 -3.5V227l-3.5 3.5Z" fill="#d9d9d9"/><path d="M564.8 223.4H573.2V239.5H564.8Z" fill="#fff"/><path d="M564.8 223.4l3.5 -3.5H576.7l-3.5 3.5Z" fill="#fff"/><path d="M573.2 223.4l3.5 -3.5V236l-3.5 3.5Z" fill="#fff"/><path d="M564.8 207.9H573.2V223.4H564.8Z" fill="#d9d9d9"/><path d="M564.8 207.9l3.5 -3.5H576.7l-3.5 3.5Z" fill="#d9d9d9"/><path d="M573.2 207.9l3.5 -3.5V219.9l-3.5 3.5Z" fill="#d9d9d9"/><path d="M483.200 281V317.400H522.600"/><rect x="483.2" y="283.5" width="20.3" height="6.8" fill="#fff"/><rect x="483.2" y="290.3" width="30.3" height="7.2" fill="#d9d9d9"/><rect x="483.2" y="301" width="27.4" height="6.4" fill="#fff"/><rect x="483.2" y="307.4" width="20.3" height="7.1" fill="#d9d9d9"/><path d="M539.300 281V317.400H578.800"/><rect x="539.3" y="285.5" width="11" height="9.7" fill="#fff"/><rect x="550.3" y="285.5" width="17" height="9.7" fill="#d9d9d9"/><rect x="539.3" y="302.5" width="17.2" height="10.1" fill="#fff"/><rect x="556.5" y="302.5" width="17" height="10.1" fill="#d9d9d9"/><path d="M595.400 281V317.400H635"/><rect x="595.4" y="285.5" width="11.1" height="9.7" fill="#fff"/><rect x="606.5" y="285.5" width="23.2" height="9.7" fill="#d9d9d9"/><rect x="595.4" y="302.5" width="16.8" height="10.1" fill="#fff"/><rect x="612.2" y="302.5" width="17.5" height="10.1" fill="#d9d9d9"/><path d="M487.900 358V394.400H522.600M487.900 394.400L483.300 398.600"/><path d="M484.6 369.4H511.3V375.2H484.6Z" fill="#d9d9d9"/><path d="M484.6 369.4l3 -3H514.3l-3 3Z" fill="#d9d9d9"/><path d="M511.3 369.4l3 -3V372.2l-3 3Z" fill="#d9d9d9"/><path d="M484.6 363.5H501V369.4H484.6Z" fill="#fff"/><path d="M484.6 363.5l3.3 -3.3H504.3l-3.3 3.3Z" fill="#fff"/><path d="M501 363.5l3.3 -3.3V366.1l-3.3 3.3Z" fill="#fff"/><path d="M484.6 386.2H503.4V392.2H484.6Z" fill="#d9d9d9"/><path d="M484.6 386.2l2.8 -2.8H506.2l-2.8 2.8Z" fill="#d9d9d9"/><path d="M503.4 386.2l2.8 -2.8V389.4l-2.8 2.8Z" fill="#d9d9d9"/><path d="M484.6 380.3H508.5V386.2H484.6Z" fill="#fff"/><path d="M484.6 380.3l2.8 -2.8H511.3l-2.8 2.8Z" fill="#fff"/><path d="M508.5 380.3l2.8 -2.8V383.4l-2.8 2.8Z" fill="#fff"/><path d="M545.5 358V394.400H577M545.5 394.400L541.5 398.400"/><path d="M540.5 366.3H548.8V374.3H540.5Z" fill="#fff"/><path d="M540.5 366.3l4 -4H552.8l-4 4Z" fill="#fff"/><path d="M548.8 366.3l4 -4V370.3l-4 4Z" fill="#fff"/><path d="M548.8 366.3H563.4V374.3H548.8Z" fill="#d9d9d9"/><path d="M548.8 366.3l4 -4H567.4l-4 4Z" fill="#d9d9d9"/><path d="M563.4 366.3l4 -4V370.3l-4 4Z" fill="#d9d9d9"/><path d="M540.5 382.2H556.8V390.4H540.5Z" fill="#fff"/><path d="M540.5 382.2l4 -4H560.8l-4 4Z" fill="#fff"/><path d="M556.8 382.2l4 -4V386.4l-4 4Z" fill="#fff"/><path d="M556.8 382.2H571.6V390.4H556.8Z" fill="#d9d9d9"/><path d="M556.8 382.2l4 -4H575.6l-4 4Z" fill="#d9d9d9"/><path d="M571.6 382.2l4 -4V386.4l-4 4Z" fill="#d9d9d9"/><path d="M601.2 358V394.400H632.7M601.2 394.400L597.2 398.400"/><path d="M596.7 366.3H604.5V374.3H596.7Z" fill="#fff"/><path d="M596.7 366.3l4 -4H608.5l-4 4Z" fill="#fff"/><path d="M604.5 366.3l4 -4V370.3l-4 4Z" fill="#fff"/><path d="M604.5 366.3H627.4V374.3H604.5Z" fill="#d9d9d9"/><path d="M604.5 366.3l4 -4H631.4l-4 4Z" fill="#d9d9d9"/><path d="M627.4 366.3l4 -4V370.3l-4 4Z" fill="#d9d9d9"/><path d="M596.7 382.2H612.7V390.4H596.7Z" fill="#fff"/><path d="M596.7 382.2l4 -4H616.7l-4 4Z" fill="#fff"/><path d="M612.7 382.2l4 -4V386.4l-4 4Z" fill="#fff"/><path d="M612.7 382.2H627.4V390.4H612.7Z" fill="#d9d9d9"/><path d="M612.7 382.2l4 -4H631.4l-4 4Z" fill="#d9d9d9"/><path d="M627.4 382.2l4 -4V386.4l-4 4Z" fill="#d9d9d9"/></svg><div class="a" style="left:475px;top:406px;width:223.500px;height:1px;background:#e1e1e1"></div><svg style="left:479px;top:413px" width="17" height="14" viewBox="0 0 17 14" fill="none" stroke="#555" stroke-width="1"><path d="M.5 0V13.500H16.500"/><path d="M3.300 13.500V3.800h2.400V13.500M7 13.500V7h2V13.500M10.300 13.500V1h4V13.500"/></svg><div class="t" style="left:507.00px;top:413.96px;font-size:12px;color:#444;transform:scaleX(1.0184);">Другие гистограммы...</div><div class="a" style="left:527.500px;top:425.500px;width:5.500px;height:1px;background:#444"></div><div class="a" style="left:571px;top:161px;width:201px;height:143px;background:#fff;border:1px solid #d2d2d2;box-shadow:1px 2px 5px rgba(0,0,0,.25)"></div><div class="t" style="left:583.50px;top:170.26px;font-size:12px;color:#525252;transform:scaleX(0.9809);font-weight:bold;">Гистограмма с накоплением</div><div class="t" style="left:583.50px;top:192.26px;font-size:12px;color:#646464;transform:scaleX(1.0078);">Данный тип диаграммы</div><div class="t" style="left:583.50px;top:206.86px;font-size:12px;color:#646464;transform:scaleX(0.9863);">используется:</div><div class="t" style="left:583.50px;top:221.56px;font-size:12px;color:#646464;transform:scaleX(0.9816);">• для сравнения частей целого</div><div class="t" style="left:583.50px;top:236.26px;font-size:12px;color:#646464;transform:scaleX(0.9702);">значения;</div><div class="t" style="left:583.50px;top:251.06px;font-size:12px;color:#646464;transform:scaleX(0.9901);">• для отображения изменения</div><div class="t" style="left:583.50px;top:265.76px;font-size:12px;color:#646464;transform:scaleX(1.0003);">составляющих целого</div><div class="t" style="left:583.50px;top:280.46px;font-size:12px;color:#646464;transform:scaleX(0.9823);">значения со временем.</div><div class="a" style="left:131.200px;top:31.500px;width:78px;height:38px;border:3px solid #e8403c"></div><div class="a" style="left:470px;top:66px;width:39px;height:29px;border:3px solid #e8403c"></div><div class="a" style="left:531.300px;top:116px;width:55px;height:51.500px;border:3px solid #e8403c"></div><div class="a" style="left:0;top:0;width:1.300px;height:660px;background:#02783f"></div><div class="a" style="left:929px;top:159px;width:1px;height:501px;background:#fff"></div>
</body></html>
